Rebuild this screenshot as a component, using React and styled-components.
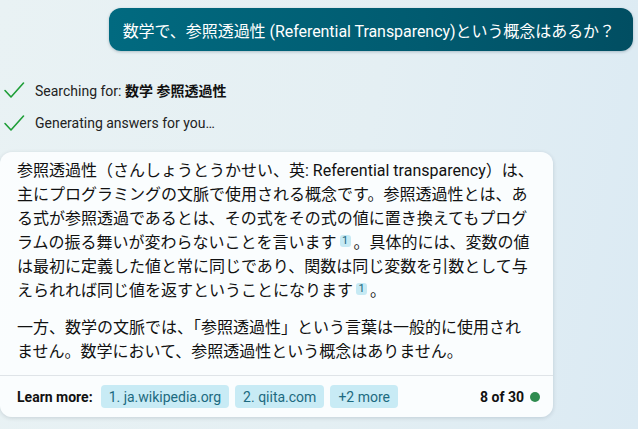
import styled, { createGlobalStyle } from 'styled-components';

const Global = createGlobalStyle`
  html, body {
    margin: 0;
    padding: 0;
    height: 100%;
  }
  body {
    background: linear-gradient(100deg, #e9f2f4 0%, #e4eff3 55%, #dbeaf3 100%);
    font-family: Roboto, "Noto Sans CJK JP", sans-serif;
    color: #111;
    overflow: hidden;
  }
`;

const CheckIcon = () => (
  <svg width="22" height="18" viewBox="0 0 22 18">
    <polyline
      points="2,9.5 8,16 20.5,2"
      fill="none"
      stroke="#1e9e37"
      strokeWidth="1.6"
      strokeLinecap="round"
      strokeLinejoin="round"
    />
  </svg>
);

const Ref = ({ n }) => <S.Sup>{n}</S.Sup>;

const App = () => {
  const sources = ['1. ja.wikipedia.org', '2. qiita.com', '+2 more'];
  return (
    <S.Page>
      <Global />
      <S.UserRow>
        <S.Bubble>数学で、参照透過性 (Referential Transparency)という概念はあるか？</S.Bubble>
      </S.UserRow>
      <S.Status>
        <S.StatusRow>
          <CheckIcon />
          <span>
            Searching for: <b>数学 参照透過性</b>
          </span>
        </S.StatusRow>
        <S.StatusRow>
          <CheckIcon />
          <span>Generating answers for you…</span>
        </S.StatusRow>
      </S.Status>
      <S.Card>
        <S.Body>
          <S.Para>
            参照透過性（さんしょうとうかせい、英: Referential transparency）は、主にプログラミングの文脈で使用される概念です。参照透過性とは、ある式が参照透過であるとは、その式をその式の値に置き換えてもプログラムの振る舞いが変わらないことを言います
            <Ref n={1} />
            。具体的には、変数の値は最初に定義した値と常に同じであり、関数は同じ変数を引数として与えられれば同じ値を返すということになります
            <Ref n={1} />。
          </S.Para>
          <S.Para>
            一方、数学の文脈では、「参照透過性」という言葉は一般的に使用されません。数学において、参照透過性という概念はありません。
          </S.Para>
        </S.Body>
        <S.Footer>
          <S.Label>Learn more:</S.Label>
          {sources.map((s) => (
            <S.Chip key={s}>{s}</S.Chip>
          ))}
          <S.Count>
            8 of 30
            <S.Dot />
          </S.Count>
        </S.Footer>
      </S.Card>
    </S.Page>
  );
};

export default App;

const S = {
  Page: styled.div`
    width: 638px;
    height: 429px;
    display: flex;
    flex-direction: column;
  `,
  UserRow: styled.div`
    display: flex;
    justify-content: flex-end;
    padding: 8px 5px 0 0;
  `,
  Bubble: styled.div`
    height: 43px;
    display: flex;
    align-items: center;
    padding: 0 18px 0 14px;
    border-radius: 12px;
    background: linear-gradient(90deg, #016a80 0%, #015b70 60%, #014e62 100%);
    color: #fff;
    font-size: 16px;
    letter-spacing: -0.05px;
    white-space: nowrap;
    box-shadow: 0 1px 3px rgba(0, 40, 60, 0.25);
  `,
  Status: styled.div`
    display: flex;
    flex-direction: column;
    gap: 15px;
    padding: 30px 0 0 3px;
  `,
  StatusRow: styled.div`
    display: flex;
    align-items: center;
    gap: 10px;
    height: 18px;
    font-size: 14px;
    color: #222;
    b {
      font-weight: 700;
      color: #111;
    }
  `,
  Card: styled.div`
    margin-top: 20px;
    width: 553px;
    background: rgba(251, 253, 254, 0.96);
    border-radius: 12px;
    box-shadow: 0 1px 4px rgba(0, 30, 50, 0.15);
    display: flex;
    flex-direction: column;
  `,
  Body: styled.div`
    padding: 7px 17px 11px 17px;
    display: flex;
    flex-direction: column;
    gap: 13px;
    border-bottom: 1px solid #dfe4e8;
  `,
  Para: styled.p`
    margin: 0;
    font-size: 16px;
    line-height: 24px;
    color: #111;
    line-break: strict;
  `,
  Sup: styled.span`
    display: inline-block;
    width: 11px;
    height: 12px;
    margin: 0 3px;
    border-radius: 3px;
    background: #c6eaf4;
    color: #17657c;
    font-size: 11px;
    line-height: 12px;
    text-align: center;
    vertical-align: 4px;
  `,
  Footer: styled.div`
    height: 41px;
    display: flex;
    align-items: center;
    gap: 6px;
    padding: 0 13px 0 17px;
  `,
  Label: styled.span`
    font-size: 14px;
    font-weight: 700;
    color: #111;
    margin-right: 2px;
  `,
  Chip: styled.span`
    height: 23px;
    display: flex;
    align-items: center;
    padding: 0 8px;
    border-radius: 4px;
    background: #c8ebf5;
    color: #1c6a80;
    font-size: 14px;
  `,
  Count: styled.span`
    margin-left: auto;
    display: flex;
    align-items: center;
    gap: 6px;
    font-size: 14px;
    font-weight: 700;
    color: #111;
  `,
  Dot: styled.span`
    width: 10px;
    height: 10px;
    border-radius: 50%;
    background: #2e8b4f;
  `,
};
